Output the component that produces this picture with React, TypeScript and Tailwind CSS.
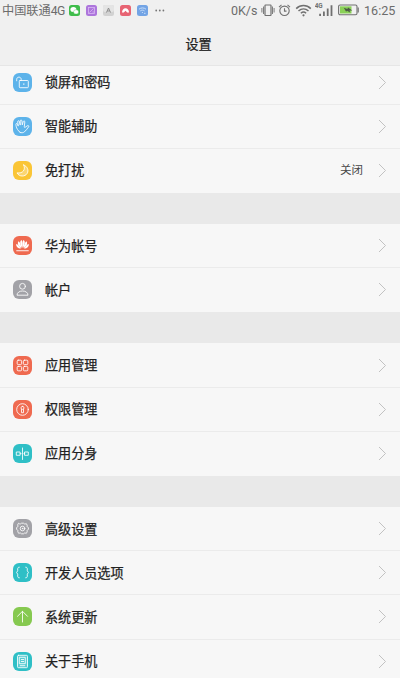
import type { ReactNode } from 'react';

type Row = { label: string; color: string; icon: ReactNode; value?: string };

const lock = (
  <>
    <rect x="6.3" y="7.500" width="9" height="7.200" rx="0.8" />
    <path d="M8.200 7.500V6.400C8.200 3.400 3.700 3.400 3.700 6.400V7.800" />
    <rect x="10.200" y="10.500" width="1.200" height="1.200" fill="#fff" stroke="none" />
  </>
);

const hand = (
  <path d="M7 15.300C5 13.500 3.600 11.500 3.200 9.300 2.900 8 2.700 6.800 3.400 6.500 4.300 6.200 4.600 7.500 5 8.700L5.300 9.100 4.700 4.900C4.600 3.500 6.100 3.300 6.400 4.600L7.200 8.100 7.200 3.900C7.300 2.700 8.800 2.700 8.900 3.900L9.300 7.900 10.200 4.600C10.600 3.400 12 3.800 11.800 5L11.300 9.700C11.200 10.400 11.700 10.700 12.300 10.200L14.300 8.800C15.400 8.200 16.300 9.100 15.500 10 14 11.800 13 13.700 11.400 14.900 10.200 15.900 8.300 16.100 7 15.300Z" />
);

const moon = <path d="M10.7 4c2.300 4.600-.9 8.800-6.700 7.900 2.200 4.100 8 4 10.200.5C16 9.300 14.300 5.200 10.700 4Z" fill="#fff" fillOpacity=".3" />;

const flower = (
  <g fill="#fff" stroke="none">
    <path d="M9.300 11.800C7 9 6.400 4.900 8.600 4 9.700 5.300 9.700 9.300 9.300 11.800Z" />
    <path d="M9.700 11.800c2.300-2.800 2.900-6.900.7-7.800C9.300 5.300 9.300 9.300 9.700 11.800Z" />
    <path d="M8.500 12.200C5.100 10.500 4.100 7.100 5.500 5.300c1.500.8 2.700 4.200 3 6.900Z" />
    <path d="M10.500 12.200c3.400-1.700 4.400-5.100 3-6.900-1.500.8-2.700 4.200-3 6.900Z" />
    <path d="M7.800 12.700C4.900 12.500 2.900 10.600 3.200 8c1.900.4 3.600 2.700 4.600 4.700Z" />
    <path d="M11.200 12.700c2.900-.2 4.900-2.100 4.600-4.700-1.900.4-3.600 2.700-4.600 4.700Z" />
    <path d="M3.300 14h12.400v1.300H3.300z" opacity=".7" />
  </g>
);

const person = (
  <>
    <circle cx="9.500" cy="6.300" r="2.900" />
    <path d="M4 14.800c0-5.200 11-5.200 11 0Z" />
  </>
);

const apps = (
  <>
    <rect x="4.200" y="4.200" width="4.400" height="4.400" rx="1" />
    <rect x="10.400" y="4.200" width="4.400" height="4.400" rx="1" />
    <rect x="4.200" y="10.400" width="4.400" height="4.400" rx="1" />
    <rect x="10.400" y="10.400" width="4.400" height="4.400" rx="1" />
  </>
);

const permission = (
  <>
    <circle cx="9.500" cy="9.500" r="5.800" />
    <rect x="8.100" y="6.400" width="2.800" height="3" rx="1.300" />
    <path d="M8.500 9.500v3.200h2V9.500" />
  </>
);

const twin = (
  <>
    <rect x="3.700" y="8" width="3.400" height="3.300" />
    <rect x="11.900" y="8" width="3.400" height="3.300" />
    <path d="M9.500 4v11.500M7.200 9.650h.9M10.900 9.650h.9" />
  </>
);

const gear = (
  <>
    <path d="M5.800 4.500c1 .8 2 .6 2.700-.3h2c.7.900 1.700 1.100 2.700.3l1 1.700c-.4 1.200 0 2 1.200 2.400v1.800c-1.200.4-1.600 1.200-1.200 2.400l-1 1.700c-1-.8-2-.6-2.700.3h-2c-.7-.9-1.700-1.100-2.700-.3l-1-1.700c.4-1.200 0-2-1.200-2.400V8.600c1.200-.4 1.600-1.200 1.200-2.400Z" />
    <circle cx="9.500" cy="9.500" r="2.300" />
    <circle cx="9.500" cy="9.500" r=".3" />
  </>
);

const braces = (
  <path d="M6.300 4.200c-1.300 0-1.600.7-1.600 1.800v1.800L3.600 9.500l1.100 1.700V13c0 1.100.3 1.800 1.600 1.800M12.700 4.200c1.300 0 1.600.7 1.600 1.800v1.800l1.100 1.700-1.100 1.700V13c0 1.100-.3 1.800-1.600 1.800" />
);

const arrowUp = <path d="M9.500 15V4.500M4.500 9.300l5-5 5 5" />;

const phone = (
  <>
    <rect x="4.500" y="3.300" width="10" height="12.400" rx="1" fill="#fff" fillOpacity=".2" />
    <rect x="6.700" y="5.300" width="5.600" height="6.400" />
    <path d="M8.300 7.500h2.400M8.300 9.500h2.400M7.200 13.700h4.600" />
  </>
);

const groups: { height: string; rows: Row[] }[] = [
  {
    height: 'h-[127px]',
    rows: [
      { label: '锁屏和密码', color: 'bg-[#5db3ea]', icon: lock },
      { label: '智能辅助', color: 'bg-[#5db3ea]', icon: hand },
      { label: '免打扰', color: 'bg-[#fac536]', icon: moon, value: '关闭' },
    ],
  },
  {
    height: 'h-[88.3px]',
    rows: [
      { label: '华为帐号', color: 'bg-[#ef6a50]', icon: flower },
      { label: '帐户', color: 'bg-[#a2a2a7]', icon: person },
    ],
  },
  {
    height: 'h-[132.5px]',
    rows: [
      { label: '应用管理', color: 'bg-[#ef6a50]', icon: apps },
      { label: '权限管理', color: 'bg-[#ef6a50]', icon: permission },
      { label: '应用分身', color: 'bg-[#2fbfc6]', icon: twin },
    ],
  },
  {
    height: 'h-[176.6px]',
    rows: [
      { label: '高级设置', color: 'bg-[#a2a2a7]', icon: gear },
      { label: '开发人员选项', color: 'bg-[#2fbfc6]', icon: braces },
      { label: '系统更新', color: 'bg-[#86c950]', icon: arrowUp },
      { label: '关于手机', color: 'bg-[#2fbfc6]', icon: phone },
    ],
  },
];

function SettingRow({ row }: { row: Row }) {
  return (
    <li className="flex h-[44.15px] shrink-0 items-center border-b border-[#ebebeb] px-[13px] last:border-transparent">
      <span className={`h-[19px] w-[19px] shrink-0 rounded-[6px] ${row.color}`}>
        <svg width="19" height="19" viewBox="0 0 19 19" fill="none" stroke="#fff" strokeOpacity=".85" strokeLinecap="round" strokeLinejoin="round">
          {row.icon}
        </svg>
      </span>
      <span className="ml-[13px] flex-1 pt-[2px] text-[13.1px] leading-5 text-[#222] [-webkit-text-stroke:0.25px_#222]">{row.label}</span>
      {row.value && <span className="mr-[15px] pt-px text-[11.500px] text-[#484848]">{row.value}</span>}
      <svg width="9" height="15" viewBox="0 0 9 15" fill="none" stroke="#c2c2c2">
        <path d="m1 1 6.500 6.500L1 14" />
      </svg>
    </li>
  );
}

function StatusBar() {
  return (
    <div className="flex h-5 items-center justify-between pr-[4px] pl-[2px] text-[#6c6c6c]">
      <div className="flex items-center">
        <span className="w-[62px] pt-px text-[12.200px] leading-5 whitespace-nowrap">中国联通<span className="tracking-[-0.6px]">4G</span></span>
        <div className="ml-[5px] flex gap-[6px]">
          <svg width="11" height="11" viewBox="0 0 11 11">
            <rect width="11" height="11" rx="2.500" fill="#3fbd4b" />
            <ellipse cx="4.400" cy="4.400" rx="3" ry="2.500" fill="#fff" />
            <ellipse cx="7.100" cy="6.900" rx="2.600" ry="2.200" fill="#fff" stroke="#3fbd4b" strokeWidth=".4" />
          </svg>
          <svg width="11" height="11" viewBox="0 0 11 11" fill="none" stroke="#d9b8f3" strokeWidth=".8">
            <rect width="11" height="11" rx="2.500" fill="#ad75dc" stroke="none" />
            <rect x="2.500" y="2.500" width="6" height="6" />
            <path d="m3.500 7.500 4-4M6.500 7h1.500" />
          </svg>
          <svg width="11" height="11" viewBox="0 0 11 11">
            <rect width="11" height="11" rx="2" fill="#d2d2d2" />
            <rect width="11" height="7" rx="2" fill="#e4e4e4" />
            <path d="M3.500 7.500 5.500 3l2 4.500M4.300 6h2.400" fill="none" stroke="#8c8c8c" />
          </svg>
          <svg width="11" height="11" viewBox="0 0 11 11">
            <rect width="11" height="11" rx="2.500" fill="#e76473" />
            <path d="M2 7.500C2 5 3.500 3.300 5.500 3.300S9 5 9 7.500H7.200L5.500 5.800 3.800 7.500Z" fill="#fff" />
          </svg>
          <svg width="11" height="11" viewBox="0 0 11 11" fill="none" stroke="#d3e5fc" strokeWidth=".9">
            <rect width="11" height="11" rx="2.500" fill="#73a4e5" stroke="none" />
            <path d="M2 4.200c2-1.700 5-1.700 7 0M3.300 5.900c1.300-1 3-1 4.200 0M4.900 7.500h1M7 8.300h1.500" />
          </svg>
        </div>
        <svg className="ml-[7px]" width="10" height="3" viewBox="0 0 10 3" fill="#777">
          <circle cx="1.200" cy="1.500" r=".9" />
          <circle cx="4.800" cy="1.500" r=".9" />
          <circle cx="8.400" cy="1.500" r=".9" />
        </svg>
      </div>
      <div className="flex items-center">
        <span className="w-[27px] pt-px text-[12.500px] leading-5 whitespace-nowrap">0K/s</span>
        <svg className="ml-[3px]" width="14" height="13" viewBox="0 0 14 13" fill="none" stroke="#707070" strokeWidth="1.200">
          <rect x="4" y="1" width="6" height="10.500" rx=".5" />
          <path d="M2.500 2.500v7.500M.9 4v4.500M11.500 2.500v7.500M13.100 4v4.500" strokeWidth=".9" />
        </svg>
        <svg className="ml-[3px]" width="13" height="13" viewBox="0 0 13 13" fill="none" stroke="#707070" strokeWidth="1.100">
          <circle cx="6.500" cy="6.800" r="4.700" />
          <path d="M6.500 4.300V7.100h2M1 3.100l2.500-2.200M12 3.100 9.500.9" />
        </svg>
        <svg className="ml-[4px]" width="17" height="13" viewBox="0 0 17 13" fill="none" stroke="#707070" strokeWidth="1.500">
          <path d="M1.200 4.600c4.200-4 10.400-4 14.600 0M3.500 7c3-2.800 7-2.800 10 0M5.900 9.300c1.600-1.500 3.600-1.500 5.200 0" />
          <circle cx="8.500" cy="11.300" r="1.100" fill="#707070" stroke="none" />
        </svg>
        <svg className="ml-[3px]" width="19" height="15" viewBox="0 0 19 15" fill="#707070">
          <text x="-.3" y="4.900" fontSize="6.400" fontWeight="700" fontFamily="Roboto, sans-serif">4G</text>
          <path d="M4.200 10.700h1.800V13H4.200zM8 8.500h1.800V13H8zM11.800 5.500h1.800V13h-1.800zM15.600 2.200h1.800V13h-1.800z" />
        </svg>
        <svg className="ml-[4px]" width="22" height="12" viewBox="0 0 22 12">
          <rect x=".6" y="1" width="18.400" height="9.800" rx="1.500" fill="none" stroke="#707070" strokeWidth="1.100" />
          <path d="M20.200 3.500v5" stroke="#707070" strokeWidth="1.200" />
          <path d="M2 2.300h11.500v7.200H2z" fill="#8ad157" />
          <path d="m5.800 3.800 3.600 1.300.6-1.500 4.300 3-2.800-.1.700 1.900-3.200-1.600-.9 1Z" fill="#4c5945" />
        </svg>
        <span className="ml-[4px] w-[32px] pt-px text-[12.600px] leading-5 whitespace-nowrap">16:25</span>
      </div>
    </div>
  );
}

export default function App() {
  return (
    <div className="h-[678px] w-[400px] overflow-hidden bg-[#e9e9e9] font-['Roboto','Noto_Sans_CJK_SC',sans-serif]">
      <header className="h-[66px] border-b border-[#e6e6e6] bg-[#f0f0f0]">
        <StatusBar />
        <h1 className="mt-[15px] pr-[3px] text-center text-[13.1px] leading-5 text-[#222] [-webkit-text-stroke:0.25px_#222]">设置</h1>
      </header>
      <main className="flex flex-col gap-[31.1px]">
        {groups.map((group, i) => (
          <ul key={i} className={`flex shrink-0 flex-col justify-end overflow-hidden bg-[#f7f7f7] ${group.height}`}>
            {group.rows.map((row) => (
              <SettingRow key={row.label} row={row} />
            ))}
          </ul>
        ))}
      </main>
    </div>
  );
}
